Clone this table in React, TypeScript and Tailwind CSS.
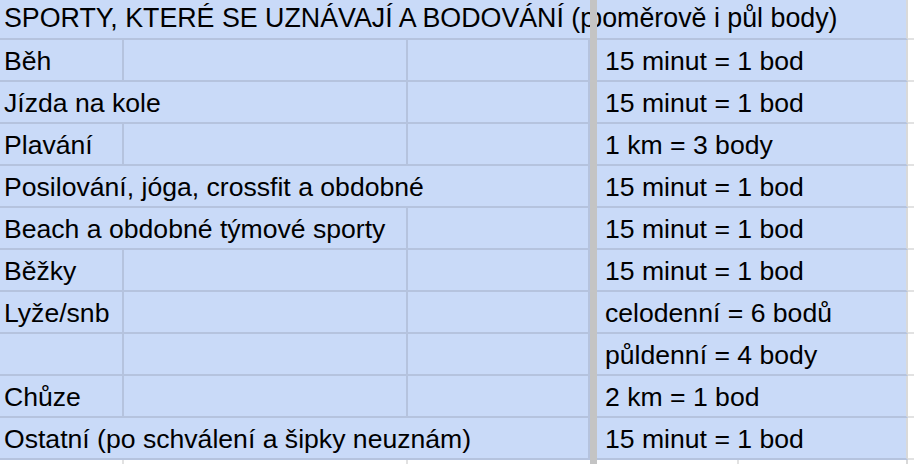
const HEADER = "SPORTY, KTERÉ SE UZNÁVAJÍ A BODOVÁNÍ (poměrově i půl body)"

type Row = {
  activity: string
  span: 1 | 2 | 3
  points: string
}

const rows: Row[] = [
  { activity: "Běh", span: 1, points: "15 minut = 1 bod" },
  { activity: "Jízda na kole", span: 2, points: "15 minut = 1 bod" },
  { activity: "Plavání", span: 1, points: "1 km = 3 body" },
  { activity: "Posilování, jóga, crossfit a obdobné", span: 3, points: "15 minut = 1 bod" },
  { activity: "Beach a obdobné týmové sporty", span: 2, points: "15 minut = 1 bod" },
  { activity: "Běžky", span: 1, points: "15 minut = 1 bod" },
  { activity: "Lyže/snb", span: 1, points: "celodenní = 6 bodů" },
  { activity: "", span: 1, points: "půldenní = 4 body" },
  { activity: "Chůze", span: 1, points: "2 km = 1 bod" },
  { activity: "Ostatní (po schválení a šipky neuznám)", span: 3, points: "15 minut = 1 bod" },
]

const firstCellWidth = {
  1: "w-[124px]",
  2: "w-[408px]",
  3: "w-[590px]",
}

function LeftRow({ activity, span }: { activity: string; span: 1 | 2 | 3 }) {
  return (
    <div className="flex h-[42px] border-b-2 border-[#b5c3de] bg-[#c9daf8]">
      <div className={`${firstCellWidth[span]} shrink-0 whitespace-nowrap border-r-2 border-[#b5c3de] pl-[4px] pt-[6px] leading-[30px]`}>
        {activity}
      </div>
      {span < 2 && <div className="w-[284px] shrink-0 border-r-2 border-[#b5c3de]" />}
      {span < 3 && <div className="w-[182px] shrink-0 border-r-2 border-[#b5c3de]" />}
    </div>
  )
}

function RightRow({ points }: { points: string }) {
  return (
    <div className="flex h-[42px]">
      <div className="w-[311px] shrink-0 whitespace-nowrap border-b-2 border-r-2 border-b-[#b5c3de] border-r-[#d9d9d9] bg-[#c9daf8] pl-[8px] pt-[6px] leading-[30px]">
        {points}
      </div>
      <div className="flex-1 border-b-2 border-[#e2e2e2]" />
    </div>
  )
}

export default function App() {
  return (
    <div className="flex h-[464px] w-[914px] overflow-hidden bg-white font-['Liberation_Sans',Arial,sans-serif] text-[26.6px] text-black">
      {/* frozen columns */}
      <div className="flex w-[590px] shrink-0 flex-col">
        <div className="h-[40px] overflow-hidden whitespace-nowrap border-b-2 border-[#b5c3de] bg-[#c9daf8] pl-[4px] pt-[3px] text-[26.8px] leading-[30px]">
          {HEADER}
        </div>
        {rows.map((row, i) => (
          <LeftRow key={i} activity={row.activity} span={row.span} />
        ))}
        <div className="flex flex-1">
          <div className="w-[124px] border-r-2 border-[#e2e2e2]" />
          <div className="w-[284px] border-r-2 border-[#e2e2e2]" />
          <div className="w-[182px]" />
        </div>
      </div>

      {/* freeze bar */}
      <div className="w-[7px] shrink-0 bg-[#c4c4c4]" />

      {/* scrolled columns */}
      <div className="flex min-w-0 flex-1 flex-col">
        <div className="flex h-[40px]">
          <div className="w-[311px] shrink-0 overflow-hidden whitespace-nowrap border-b-2 border-r-2 border-b-[#b5c3de] border-r-[#d9d9d9] bg-[#c9daf8] pt-[3px] text-[26.8px] leading-[30px]">
            <span className="-ml-[586px]">{HEADER}</span>
          </div>
          <div className="flex-1 border-b-2 border-[#e2e2e2]" />
        </div>
        {rows.map((row, i) => (
          <RightRow key={i} points={row.points} />
        ))}
        <div className="flex flex-1">
          <div className="w-[142px] border-r-2 border-[#e2e2e2]" />
          <div className="w-[169px] border-r-2 border-[#d9d9d9]" />
        </div>
      </div>
    </div>
  )
}
